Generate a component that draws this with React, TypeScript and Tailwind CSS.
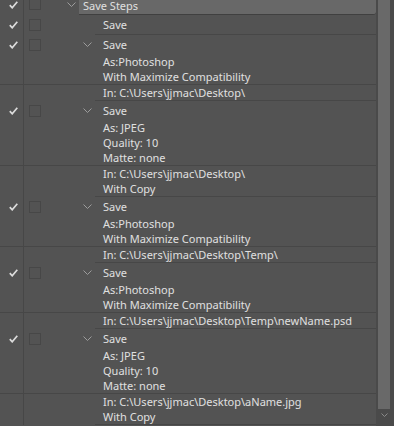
import React from "react";

function Check() {
  return (
    <svg width="9" height="8" viewBox="0 0 9 8" className="block">
      <path d="M0.8 4.2 L3.2 6.8 L8.3 0.8" stroke="#dcdcdc" strokeWidth="1.7" fill="none" />
    </svg>
  );
}

function Box() {
  return <div className="w-[12px] h-[12px] shrink-0 border border-[#474747]" />;
}

function Chevron() {
  return (
    <svg width="9" height="5" viewBox="0 0 9 5" className="block">
      <path d="M0.5 0.5 L4.5 4.5 L8.5 0.5" stroke="#9c9c9c" strokeWidth="1" fill="none" />
    </svg>
  );
}

type RowProps = {
  text: string;
  big?: boolean;
  check?: boolean;
  chevron?: boolean;
  full?: boolean;
  partial?: boolean;
};

function Row({ text, big, check, chevron, full, partial }: RowProps) {
  return (
    <div className={full ? "flex border-b border-[#474747]" : "flex"}>
      <div className="w-[24px] shrink-0 border-r border-[#474747] flex items-center pl-[9px]">
        {check ? <Check /> : null}
      </div>
      <div className="w-[71px] shrink-0 flex items-center pl-[5px]">
        {check ? <Box /> : null}
        {chevron ? (
          <span className="ml-[42px]">
            <Chevron />
          </span>
        ) : null}
      </div>
      <div
        className={
          (partial ? "border-b border-[#474747] " : "") +
          (big
            ? "flex-1 pl-[8px] leading-[19px] whitespace-nowrap"
            : "flex-1 pl-[8px] leading-[15px] whitespace-nowrap")
        }
      >
        {text}
      </div>
    </div>
  );
}

function Step({ b1, b2 }: { b1: string[]; b2: string[] }) {
  return (
    <>
      <Row text="Save" big check chevron />
      {b1.map((t, i) => (
        <Row key={"a" + i} text={t} full={i === b1.length - 1} />
      ))}
      {b2.map((t, i) => (
        <Row key={"b" + i} text={t} partial={i === b2.length - 1} />
      ))}
    </>
  );
}

export default function App() {
  return (
    <div
      className="w-[394px] h-[426px] overflow-hidden bg-[#535353] flex text-[11px] text-[#e0e0e0]"
      style={{ fontFamily: '"Noto Sans", "Open Sans", sans-serif' }}
    >
      <div className="w-[376px] shrink-0 flex flex-col">
        <div className="flex h-[15px]">
          <div className="w-[24px] shrink-0 border-r border-[#474747] flex items-start pl-[9px] pt-[1px]">
            <Check />
          </div>
          <div className="w-[55px] shrink-0 flex items-start pl-[5px]">
            <div className="-mt-[2px]">
              <Box />
            </div>
            <span className="ml-[26px] pt-[2px]">
              <Chevron />
            </span>
          </div>
          <div className="flex-1 bg-[#686868] rounded-br-[3px] border-b border-[#404040] pl-[4px] leading-[11px] whitespace-nowrap">
            Save Steps
          </div>
        </div>
        <Row text="Save" big check partial />
        <Step
          b1={["As:Photoshop", "With Maximize Compatibility"]}
          b2={["In: C:\\Users\\jjmac\\Desktop\\"]}
        />
        <Step
          b1={["As: JPEG", "Quality: 10", "Matte: none"]}
          b2={["In: C:\\Users\\jjmac\\Desktop\\", "With Copy"]}
        />
        <Step
          b1={["As:Photoshop", "With Maximize Compatibility"]}
          b2={["In: C:\\Users\\jjmac\\Desktop\\Temp\\"]}
        />
        <Step
          b1={["As:Photoshop", "With Maximize Compatibility"]}
          b2={["In: C:\\Users\\jjmac\\Desktop\\Temp\\newName.psd"]}
        />
        <Step
          b1={["As: JPEG", "Quality: 10", "Matte: none"]}
          b2={["In: C:\\Users\\jjmac\\Desktop\\aName.jpg", "With Copy"]}
        />
      </div>
      <div className="w-[18px] shrink-0 bg-[#4a4a4a] flex flex-col pl-[2px] pr-[4px]">
        <div className="h-[409px] shrink-0 bg-[#696969]" />
        <div className="flex justify-center pt-[4px]">
          <svg width="7" height="4" viewBox="0 0 7 4" className="block">
            <path d="M0.5 0.5 L3.5 3.5 L6.5 0.5" stroke="#8a8a8a" strokeWidth="1" fill="none" />
          </svg>
        </div>
      </div>
    </div>
  );
}
